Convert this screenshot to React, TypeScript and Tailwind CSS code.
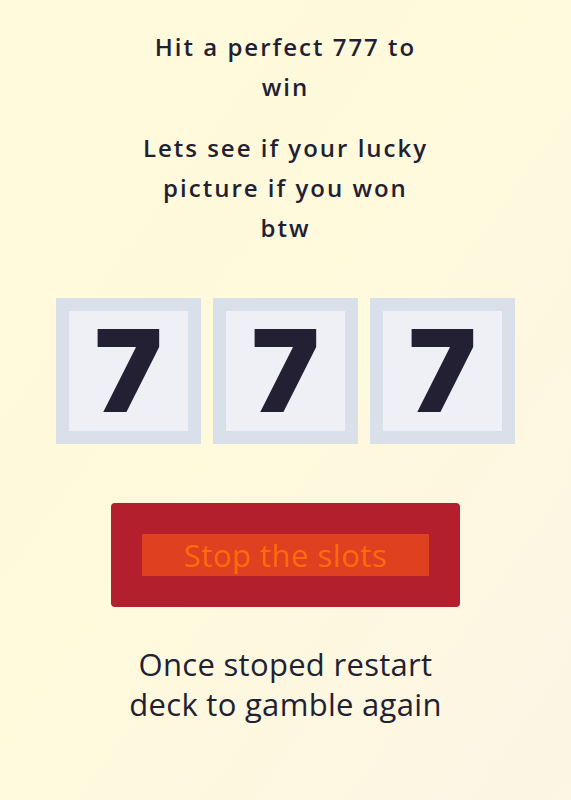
import { useState } from 'react';

const SLOTS = ['7', '7', '7'];

export default function App() {
  const [spinning, setSpinning] = useState(true);

  return (
    <div className="min-h-[800px] bg-linear-to-br from-[#fffadb] via-[#fff9dd] to-[#fdf5e5] text-[#221f33] flex flex-col items-center">
      <div className="w-[296px] pt-[27px] text-center font-['Open_Sans',sans-serif] font-semibold text-[24px] leading-[40px] tracking-[2px]">
        <h1>Hit a perfect 777 to win</h1>
        <p className="mt-[21px]">Lets see if your lucky picture if you won btw</p>
      </div>

      <div className="mt-[50px] flex gap-[12px]">
        {SLOTS.map((s, i) => (
          <div
            key={i}
            className="w-[145px] h-[146px] border-[13px] border-[#d9e0ea] bg-[#eef0f6] flex items-center justify-center"
          >
            <span className="font-['Inter',sans-serif] font-black text-[114px] leading-none text-[#222032]">
              {s}
            </span>
          </div>
        ))}
      </div>

      <button
        onClick={() => setSpinning(!spinning)}
        className="mt-[59px] w-[349px] h-[104px] rounded-[4px] bg-[#b41f2e] flex items-center justify-center"
      >
        <span className="w-[287px] h-[42px] bg-[#de4020] text-[#ff6a0a] font-['Open_Sans',sans-serif] text-[31px] leading-[42px] tracking-[0.5px]">
          Stop the slots
        </span>
      </button>

      <p className="mt-[37px] w-[360px] text-center font-['Open_Sans',sans-serif] text-[31px] leading-[40px] tracking-[0.3px]">
        Once stoped restart deck to gamble again
      </p>
    </div>
  );
}
